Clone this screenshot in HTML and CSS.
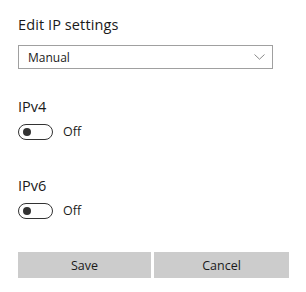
FILE: index.html
```html
<!DOCTYPE html>
<html>
<head>
<meta charset="utf-8">
<link rel="stylesheet" href="styles.css">
</head>
<body>
<div class="panel">
  <h1 class="title">Edit IP settings</h1>
  <div class="select">
    <span>Manual</span>
    <svg class="chev" width="11" height="6" viewBox="0 0 11 6"><path d="M0.5 0.5 L5.5 5.2 L10.5 0.5" fill="none" stroke="#8a8a8a" stroke-width="1"/></svg>
  </div>
  <div class="section">
    <div class="label">IPv4</div>
    <div class="toggle-row">
      <span class="toggle"><span class="knob"></span></span>
      <span class="state">Off</span>
    </div>
  </div>
  <div class="section second">
    <div class="label">IPv6</div>
    <div class="toggle-row">
      <span class="toggle"><span class="knob"></span></span>
      <span class="state">Off</span>
    </div>
  </div>
  <div class="buttons">
    <button class="btn">Save</button>
    <button class="btn">Cancel</button>
  </div>
</div>
</body>
</html>
```

FILE: styles.css
```css
html, body {
  margin: 0;
  padding: 0;
  background: #ffffff;
}
body {
  font-family: "Open Sans", "Noto Sans", sans-serif;
  color: #1a1a1a;
}
.panel {
  width: 306px;
  height: 292px;
  box-sizing: border-box;
  padding: 15px 17px 0 18px;
}
.title {
  margin: 0;
  font-size: 14.5px;
  font-weight: 400;
  line-height: 20px;
  height: 20px;
  letter-spacing: 0.1px;
}
.select {
  margin-top: 10px;
  width: 255px;
  height: 24px;
  box-sizing: border-box;
  border: 1px solid #a0a0a0;
  display: flex;
  align-items: center;
  justify-content: space-between;
  padding: 0 7px 0 9px;
  font-size: 12px;
}
.chev {
  display: block;
}
.section {
  margin-top: 28px;
}
.section.second {
  margin-top: 36px;
}
.label {
  font-size: 14.5px;
  line-height: 20px;
  height: 20px;
}
.toggle-row {
  margin-top: 6px;
  display: flex;
  align-items: center;
  gap: 10px;
  height: 17px;
}
.toggle {
  width: 35px;
  height: 16px;
  box-sizing: border-box;
  border: 1.6px solid #333333;
  border-radius: 8px;
  display: flex;
  align-items: center;
  padding-left: 4px;
}
.knob {
  width: 8px;
  height: 8px;
  border-radius: 50%;
  background: #333333;
}
.state {
  font-size: 12.5px;
}
.buttons {
  margin-top: 33px;
  display: flex;
  gap: 3px;
}
.btn {
  height: 26px;
  border: none;
  background: #cccccc;
  font-family: "Open Sans", "Noto Sans", sans-serif;
  font-size: 12.5px;
  color: #1a1a1a;
  padding: 0;
  margin: 0;
}
.btn:first-child {
  width: 133px;
}
.btn:last-child {
  width: 135px;
}
```
